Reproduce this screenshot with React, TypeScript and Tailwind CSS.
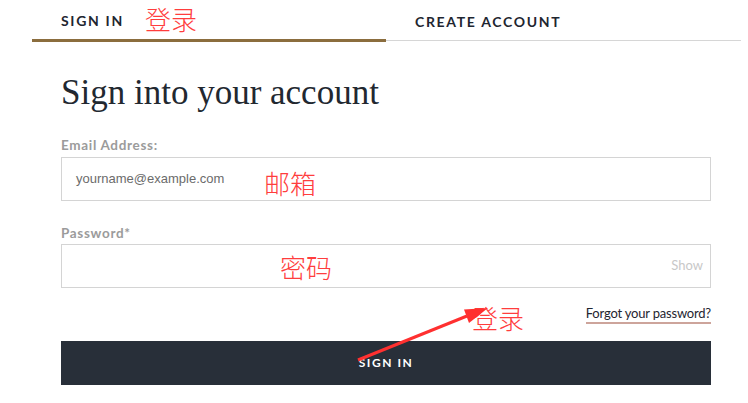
import React from "react";

const lato = { fontFamily: "Lato, 'Noto Sans', sans-serif" };

const Annotation: React.FC<{ text: string; className: string }> = ({ text, className }) => (
  <div
    className={`absolute text-[26px] leading-none font-light text-[#ff3d3d] ${className}`}
    style={{ fontFamily: "'Noto Sans CJK SC', sans-serif" }}
  >
    {text}
  </div>
);

const App: React.FC = () => {
  return (
    <div className="relative w-full h-[403px] bg-white overflow-hidden" style={lato}>
      {/* tabs */}
      <div className="ml-[32px] w-[709px] flex items-start">
        <div className="w-[354px] h-[42px] border-b-[3px] border-[#8b6d3e] pl-[29px] pt-[2px] flex items-center">
          <span className="text-[14px] font-bold tracking-[0.12em] text-[#1e2630]">SIGN IN</span>
        </div>
        <div className="w-[355px] h-[41px] border-b border-[#d6d6d6] pl-[29px] pt-[2px] flex items-center">
          <span className="text-[14px] font-bold tracking-[0.12em] text-[#1e2630]">CREATE ACCOUNT</span>
        </div>
      </div>

      {/* form */}
      <div className="ml-[61px] w-[650px] flex flex-col">
        <h1
          className="mt-[30px] text-[35px] leading-[42px] text-[#222830]"
          style={{ fontFamily: "'Liberation Serif', serif" }}
        >
          Sign into your account
        </h1>

        <label className="mt-[23px] mb-[4px] text-[13.5px] leading-4 font-bold tracking-[0.05em] text-[#9b9b9b]">
          Email Address:
        </label>
        <div className="h-[44px] border border-[#d4d4d4] flex items-center pl-[14px]">
          <span
            className="text-[13px] text-[#6b6b6b]"
            style={{ fontFamily: "'Liberation Sans', Arial, sans-serif" }}
          >
            yourname@example.com
          </span>
        </div>

        <label className="mt-[24px] mb-[3px] text-[13.5px] leading-4 font-bold tracking-[0.05em] text-[#9b9b9b]">
          Password*
        </label>
        <div className="h-[44px] border border-[#d4d4d4] flex items-center justify-end pr-[7px]">
          <span className="text-[13px] text-[#c8c8c8]">Show</span>
        </div>

        <div className="flex justify-end mt-[17px]">
          <span className="text-[13px] leading-4 tracking-[-0.015em] text-[#1f2530] border-b-2 border-[#cda49b] pb-px">
            Forgot your password?
          </span>
        </div>

        <button className="mt-[17px] h-[44px] bg-[#282f39] flex items-center justify-center">
          <span className="text-[12px] font-bold tracking-[0.13em] text-white">SIGN IN</span>
        </button>
      </div>

      {/* red annotations */}
      <Annotation text="登录" className="left-[145px] top-[6px]" />
      <Annotation text="邮箱" className="left-[264px] top-[170px]" />
      <Annotation text="密码" className="left-[280px] top-[254px]" />
      <Annotation text="登录" className="left-[472px] top-[305px]" />
      <svg className="absolute left-0 top-0" width="748" height="403">
        <line x1="358" y1="360" x2="467" y2="316" stroke="#ff3030" strokeWidth="3" />
        <polygon points="488,308 469,323 464,309.5" fill="#ff3030" />
      </svg>
    </div>
  );
};

export default App;
